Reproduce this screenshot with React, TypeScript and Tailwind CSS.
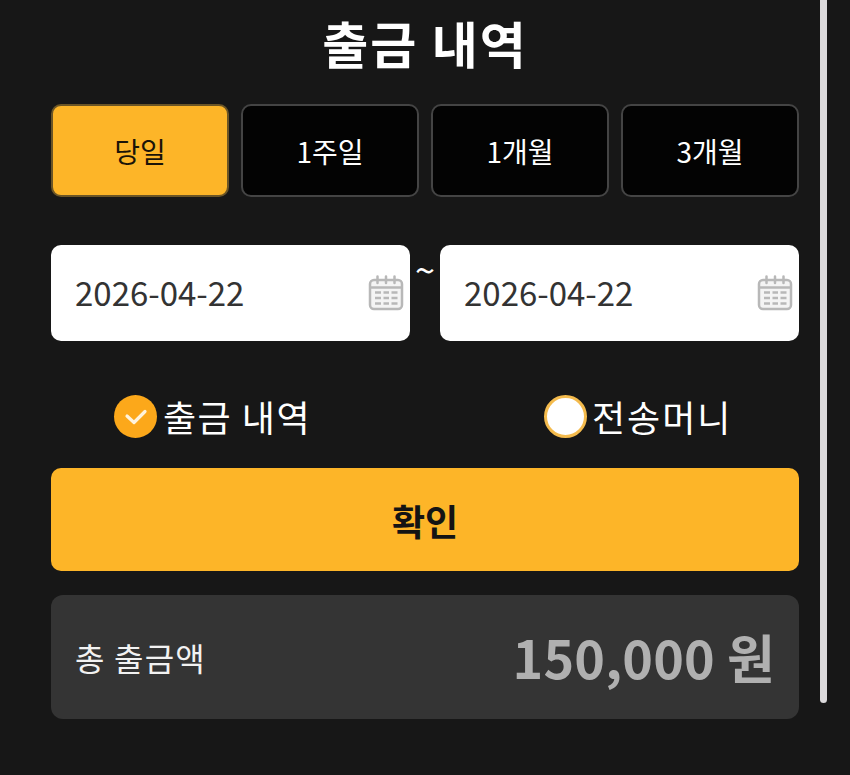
const font = { fontFamily: '"Noto Sans CJK KR", "Noto Sans", sans-serif' };

function CalendarIcon() {
  return (
    <svg width="36" height="36" viewBox="0 0 36 36" fill="none" className="absolute right-[6px] top-[30px]">
      <rect x="2" y="5" width="32" height="29" rx="4" stroke="#b8b8b8" strokeWidth="2.5" fill="#f4f4f4" />
      <path d="M2 12.5H34" stroke="#b8b8b8" strokeWidth="2.5" />
      <path d="M9.5 1.5V8M18 1.5V8M26.5 1.5V8" stroke="#b8b8b8" strokeWidth="2.5" strokeLinecap="round" />
      <path d="M7 17.5H13M15.5 17.5H21M23.5 17.5H29.5M7 23H13M15.5 23H21M23.5 23H29.5M7 28.5H13M15.5 28.5H21M23.5 28.5H29.5" stroke="#b8b8b8" strokeWidth="2.5" />
    </svg>
  );
}

function DateBox() {
  return (
    <div className="relative flex h-[96px] items-center rounded-[10px] bg-white pl-[24px] text-[33px] text-[#333333]">
      2026-04-22
      <CalendarIcon />
    </div>
  );
}

export default function App() {
  const tabs = ["당일", "1주일", "1개월", "3개월"];
  return (
    <div style={font} className="relative h-[775px] w-[850px] overflow-hidden bg-[#171717] px-[51px]">
      <div className="absolute left-[820px] top-0 h-[703px] w-[7px] rounded-b-[4px] bg-[#dcdadc]" />
      <h1 className="flex h-[104px] items-center justify-center pb-[20px] text-[50px] font-bold tracking-[2px] text-white">출금 내역</h1>
      <div className="grid grid-cols-4 gap-[12px]">
        {tabs.map((t, i) => (
          <div
            key={t}
            className={
              i === 0
                ? "flex h-[93px] items-center justify-center rounded-[10px] border-2 border-[#6b5526] bg-[#fdb528] text-[28px] text-[#1b1408]"
                : "flex h-[93px] items-center justify-center rounded-[10px] border-2 border-[#444444] bg-[#030303] text-[28px] text-white"
            }
          >
            {t}
          </div>
        ))}
      </div>
      <div className="mt-[48px] grid grid-cols-[359px_30px_359px]">
        <DateBox />
        <div className="pt-[6px] text-center text-[36px] leading-[34px] text-white">~</div>
        <DateBox />
      </div>
      <div className="mt-[54px] grid h-[43px] grid-cols-2 text-[36px] leading-[36px] text-white">
        <div className="flex items-center pl-[63px]">
          <span className="mr-[6px] flex h-[43px] w-[43px] shrink-0 items-center justify-center rounded-full bg-[#fca81a]">
            <svg width="24" height="18" viewBox="0 0 24 18" fill="none">
              <path d="M3 8L10 14.5L21 3.5" stroke="#fff3dc" strokeWidth="3.2" strokeLinecap="round" strokeLinejoin="round" />
            </svg>
          </span>
          <span className="pb-[2px] tracking-[1.5px]">출금 내역</span>
        </div>
        <div className="flex items-center pl-[119px]">
          <span className="mr-[5px] h-[43px] w-[43px] shrink-0 rounded-full border-[3px] border-[#f4bb4d] bg-white" />
          <span className="pb-[2px] tracking-[2px]">전송머니</span>
        </div>
      </div>
      <div className="mt-[30px] flex h-[103px] items-center justify-center rounded-[10px] bg-[#fdb528] text-[36px] font-bold text-[#141414]">
        확인
      </div>
      <div className="mt-[24px] flex h-[124px] items-center justify-between rounded-[12px] bg-[#343434] px-[24px]">
        <span className="text-[32px] tracking-[1.2px] text-[#f2f2f2]">총 출금액</span>
        <span className="text-[52px] font-bold tracking-[0.2px] text-[#b0b0b0]">150,000 원</span>
      </div>
    </div>
  );
}
